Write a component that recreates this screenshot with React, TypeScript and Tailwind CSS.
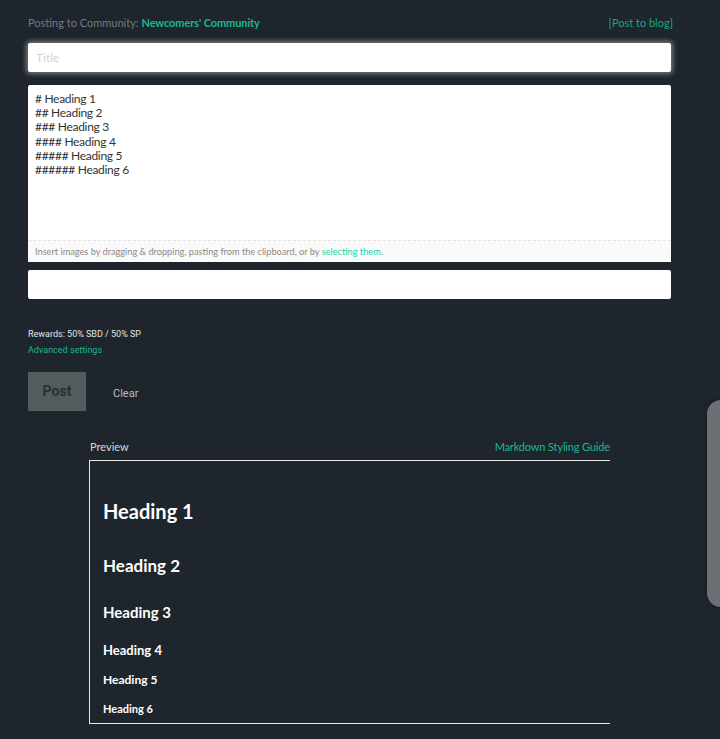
import React from 'react';

const SANS = "font-['Lato','Noto_Sans',sans-serif]";

export default function App() {
  const source = [
    '# Heading 1',
    '## Heading 2',
    '### Heading 3',
    '#### Heading 4',
    '##### Heading 5',
    '###### Heading 6',
  ];

  return (
    <div className={`relative min-h-[739px] bg-[#1e252c] ${SANS}`}>
      <div className="w-[643px] ml-[28px] pt-[15px]">
        {/* header line */}
        <div className="flex justify-between items-center text-[11px] leading-[16px]">
          <div className="text-[#737a80]">
            Posting to Community:{' '}
            <span className="text-[#1ab88f] font-bold tracking-[-0.1px]">Newcomers' Community</span>
          </div>
          <span className="text-[#1aa883] mr-[-2px]">[Post to blog]</span>
        </div>

        {/* title */}
        <div className="mt-[12px] h-[29px] bg-white rounded-[2px] shadow-[0_0_5px_2px_rgba(190,190,190,0.55)] flex items-center px-[8px] text-[12px] text-[#d4d4d4]">
          Title
        </div>

        {/* body editor */}
        <div className="mt-[13px] h-[177px] bg-white rounded-[2px] flex flex-col">
          <div className="flex-1 px-[7px] pt-[7px] text-[12px] leading-[14.2px] tracking-[-0.3px] text-[#333]">
            {source.map((l) => (
              <div key={l}>{l}</div>
            ))}
          </div>
          <div className="border-t border-dashed border-[#e2e2e2] bg-[#fafafa] h-[22px] flex items-center px-[7px] text-[9.2px] text-[#8a8a8a]">
            Insert images by dragging &amp; dropping, pasting from the clipboard, or by&nbsp;
            <span className="text-[#1fd1a8]">selecting them</span>.
          </div>
        </div>

        {/* tags */}
        <div className="mt-[8px] h-[29px] bg-white rounded-[2px]" />

        {/* rewards */}
        <div className="mt-[27px] font-['Roboto',sans-serif] text-[9px] leading-[16px]">
          <div className="text-[#e5e5e5]">Rewards: 50% SBD / 50% SP</div>
          <div className="text-[#1ab88f]">Advanced settings</div>
        </div>

        {/* actions */}
        <div className="mt-[14px] flex items-center font-['Roboto',sans-serif]">
          <div className="w-[58px] h-[39px] bg-[#535b5e] flex items-center justify-center text-[14px] font-bold text-[#2a3035]">
            Post
          </div>
          <div className="ml-[27px] mt-[6px] text-[11px] text-[#b8bec3]">Clear</div>
        </div>
      </div>

      {/* preview */}
      <div className="ml-[89px] w-[521px] mt-[28px]">
        <div className="flex justify-between items-end text-[11px] leading-[16px] pb-[5px]">
          <span className="text-[#d9d9d9] pl-[1px]">Preview</span>
          <span className="text-[#1ab88f] tracking-[-0.15px]">Markdown Styling Guide</span>
        </div>
        <div className="border-l border-t border-b border-[#e8e8e8] pl-[13px] pt-[37px] pb-[7px] text-white font-bold">
          <div className="text-[20px] leading-[26px]">Heading 1</div>
          <div className="text-[17px] leading-[22px] mt-[31px]">Heading 2</div>
          <div className="text-[15px] leading-[20px] mt-[25px]">Heading 3</div>
          <div className="text-[13px] leading-[18px] mt-[19px]">Heading 4</div>
          <div className="text-[12px] leading-[16px] mt-[13px]">Heading 5</div>
          <div className="text-[11px] leading-[14px] mt-[14px]">Heading 6</div>
        </div>
      </div>

      {/* floating side panel edge */}
      <div className="absolute left-[707px] top-[400px] w-[30px] h-[207px] rounded-[14px] bg-[#6b7075] shadow-[0_0_4px_rgba(0,0,0,0.4)]" />
    </div>
  );
}
